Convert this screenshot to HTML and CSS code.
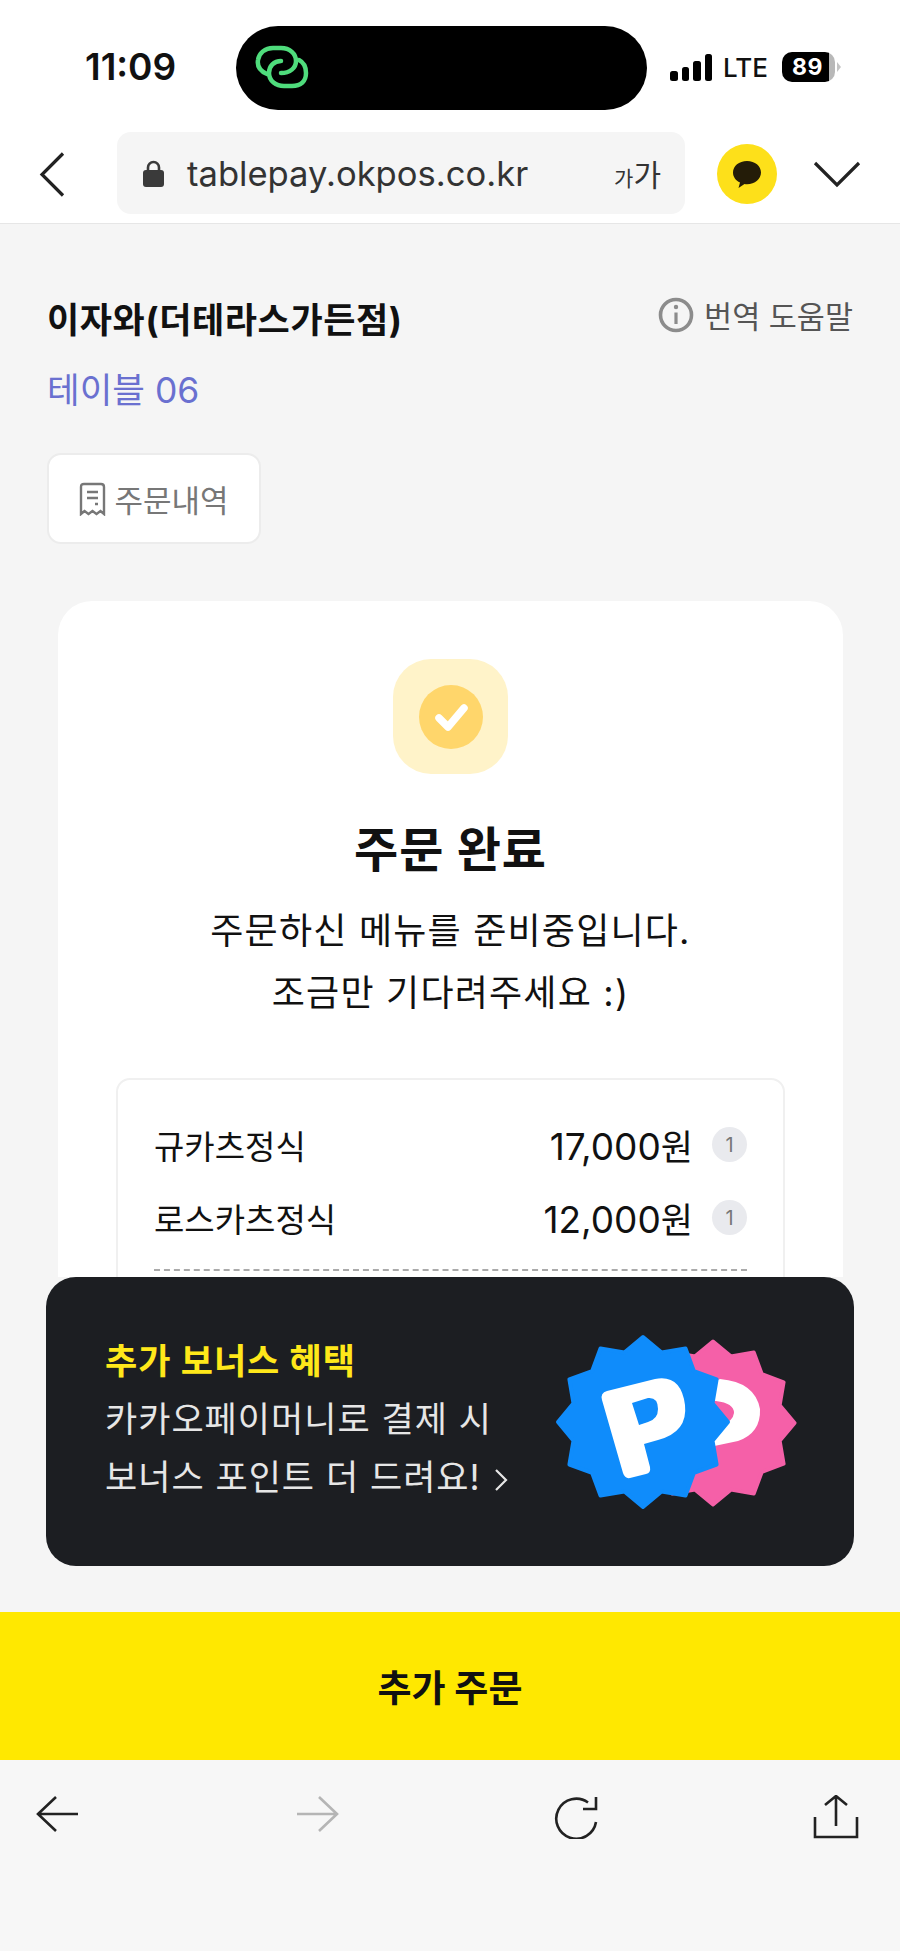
FILE: index.html
```html
<!DOCTYPE html>
<html lang="ko">
<head>
    <meta charset="UTF-8">
    <meta name="viewport" content="width=device-width, initial-scale=1.0">
    <title>주문 완료</title>
    <link rel="stylesheet" href="styles.css">
</head>
<body>
    <div class="status-bar">
        <div class="time">11:09</div>
        <div class="island">
            <svg class="link-icon" width="60" height="48" viewBox="0 0 60 48" fill="none" stroke="#4fdc7c" stroke-width="4.5" stroke-linecap="round">
                <path d="M13 29C6 26 3 21 4 15 5 8 11 3 19 3H27C36 3 42 9 42 16 42 23 36 28 27 28"/>
                <path d="M27 16C20 16 15 21 15 28 15 36 22 41 30 41H38C47 41 52 36 52 28 52 22 49 17 45 15"/>
            </svg>
        </div>
        <div class="status-right">
            <div class="signal">
                <span class="bar bar-1"></span>
                <span class="bar bar-2"></span>
                <span class="bar bar-3"></span>
                <span class="bar bar-4"></span>
            </div>
            <div class="lte">LTE</div>
            <div class="battery"><span class="battery-level">89</span></div>
            <div class="battery-nub"></div>
        </div>
    </div>

    <div class="address-bar">
        <svg class="back-icon" width="26" height="45" viewBox="0 0 26 45" fill="none" stroke="#222" stroke-width="3.2">
            <path d="M24 1.5L3 22.5 24 43.5"/>
        </svg>
        <div class="url-box">
            <svg class="lock-icon" width="23" height="27" viewBox="0 0 23 27">
                <path d="M6 11V7.5a5.5 5.5 0 0 1 11 0V11" fill="none" stroke="#3a3a3a" stroke-width="2.6"/>
                <rect x="1" y="10" width="21" height="17" rx="3" fill="#3a3a3a"/>
            </svg>
            <span class="url-text">tablepay.okpos.co.kr</span>
            <span class="font-size"><small>가</small>가</span>
        </div>
        <div class="talk-btn">
            <svg width="32" height="32" viewBox="0 0 32 32">
                <path d="M16 3C8 3 2 8 2 14.500C2 19 4.800 22.500 9 24.500L7.500 30 13.500 26C14.300 26.100 15.200 26.200 16 26.200 24 26.200 30 21 30 14.500 30 8 24 3 16 3Z" fill="#241c08"/>
            </svg>
        </div>
        <svg class="down-icon" width="48" height="27" viewBox="0 0 48 27" fill="none" stroke="#222" stroke-width="3.2">
            <path d="M2 2L24 24 46 2"/>
        </svg>
    </div>

    <div class="content">
        <div class="store-row">
            <h1 class="store-name">이자와(더테라스가든점)</h1>
            <div class="help">
                <svg width="36" height="36" viewBox="0 0 36 36" fill="none" stroke="#8c8c8c">
                    <circle cx="18" cy="18" r="15.500" stroke-width="3.600"/>
                    <path d="M18 15.500V27" stroke-width="3.200"/>
                    <circle cx="18" cy="10" r="2.200" fill="#8c8c8c" stroke="none"/>
                </svg>
                <span>번역 도움말</span>
            </div>
        </div>
        <p class="table-no">테이블 06</p>
        <button class="history-btn">
            <svg width="27" height="34" viewBox="0 0 27 34" fill="none" stroke="#777" stroke-width="2.400">
                <path d="M2 32V5C2 3 3 2 5 2H22C24 2 25 3 25 5V32L21.500 29 17.500 32 13.500 29 9.500 32 5.500 29Z"/>
                <path d="M8 10H19M8 16H19M16 22H19"/>
            </svg>
            <span>주문내역</span>
        </button>

        <div class="card">
            <div class="done-icon">
                <svg width="64" height="64" viewBox="0 0 64 64">
                    <circle cx="32" cy="32" r="32" fill="#ffd66b"/>
                    <path d="M20 33L29 42 45 23" fill="none" stroke="#fff" stroke-width="7.500" stroke-linecap="round" stroke-linejoin="round"/>
                </svg>
            </div>
            <h2 class="done-title">주문 완료</h2>
            <p class="done-text">주문하신 메뉴를 준비중입니다.<br>조금만 기다려주세요 :)</p>
            <div class="order-box">
                <div class="order-row">
                    <span class="menu-name">규카츠정식</span>
                    <span class="menu-price">17,000<small>원</small></span>
                    <span class="menu-qty">1</span>
                </div>
                <div class="order-row">
                    <span class="menu-name">로스카츠정식</span>
                    <span class="menu-price">12,000<small>원</small></span>
                    <span class="menu-qty">1</span>
                </div>
                <div class="order-line"></div>
            </div>
        </div>
    </div>

    <div class="banner-area">
        <div class="banner">
            <div class="banner-text">
                <div class="banner-title">추가 보너스 혜택</div>
                <div>카카오페이머니로 결제 시</div>
                <div>보너스 포인트 더 드려요! <svg class="banner-arrow" width="14" height="24" viewBox="0 0 14 24" fill="none" stroke="#e6e6e6" stroke-width="2.200"><path d="M2 2L12 12 2 22"/></svg></div>
            </div>
            <svg class="point-icon" width="250" height="190" viewBox="0 0 250 190">
                <defs>
                    <polygon id="star" stroke-width="4" stroke-linejoin="round" points="0,-85 18.600,-69.500 42.500,-73.600 50.900,-50.900 73.600,-42.500 69.500,-18.600 85,0 69.500,18.600 73.600,42.500 50.900,50.900 42.500,73.600 18.600,69.500 0,85 -18.600,69.500 -42.500,73.600 -50.900,50.900 -73.600,42.500 -69.500,18.600 -85,0 -69.500,-18.600 -73.600,-42.500 -50.900,-50.900 -42.500,-73.600 -18.600,-69.500"/>
                </defs>
                <use href="#star" transform="translate(163 96) scale(.96)" fill="#f560a8" stroke="#f560a8"/>
                <path fill="#fff" fill-rule="evenodd" d="M150 62L170 52Q205 55 210 82 211 106 188 114L150 122ZM150 72L166 74Q184 76 184 86 183 94 172 98L150 104Z"/>
                <use href="#star" transform="translate(93 95)" fill="#0f8cfb" stroke="#0f8cfb"/>
                <path fill="#fff" fill-rule="evenodd" d="M52 73Q50 66 57 64L105 52Q131 47 135 78 138 105 108 113L94 117 100 140Q101 146 96 147L80 151Q75 152 73 146ZM82 76 89 98 98 95Q108 92 108 82 108 70 98 71Z"/>
            </svg>
        </div>
    </div>

    <div class="order-more">추가 주문</div>

    <div class="toolbar">
        <svg width="44" height="38" viewBox="0 0 44 38" fill="none" stroke="#222" stroke-width="2.600">
            <path d="M21 2L3 19 21 36M3 19H43"/>
        </svg>
        <svg class="tool-forward" width="44" height="38" viewBox="0 0 44 38" fill="none" stroke="#b5b5b5" stroke-width="2.600">
            <path d="M23 2L41 19 23 36M41 19H1"/>
        </svg>
        <svg class="tool-reload" width="46" height="44" viewBox="0 0 46 44" fill="none" stroke="#222" stroke-width="2.600">
            <path d="M43 27A20 20 0 1 1 35 7.500"/>
            <path d="M43 2V14H30"/>
        </svg>
        <svg class="tool-share" width="46" height="44" viewBox="0 0 46 44" fill="none" stroke="#222" stroke-width="2.600">
            <path d="M12 10L23 1 34 10M23 1V31"/>
            <path d="M2 22V42H44V22"/>
        </svg>
    </div>
</body>
</html>
```

FILE: styles.css
```css
* {
    box-sizing: border-box;
}
html, body {
    margin: 0;
    padding: 0;
}
body {
    width: 900px;
    height: 1951px;
    display: flex;
    flex-direction: column;
    overflow: hidden;
    background-color: #f5f5f5;
    color: #111;
    font-family: Inter, "Noto Sans CJK KR", sans-serif;
}

/* status bar */
.status-bar {
    height: 132px;
    flex-shrink: 0;
    display: flex;
    align-items: flex-start;
    background-color: #fff;
    padding: 26px 0 0 85px;
}
.time {
    width: 151px;
    margin-top: 21px;
    font-size: 37px;
    line-height: 40px;
    font-weight: 600;
}
.island {
    width: 411px;
    height: 84px;
    display: flex;
    align-items: center;
    border-radius: 42px;
    background-color: #000;
    padding-left: 18px;
}
.link-icon {
    margin-top: 2px;
}
.status-right {
    display: flex;
    align-items: center;
    height: 30px;
    margin: 26px 0 0 23px;
}
.signal {
    display: flex;
    align-items: flex-end;
    gap: 4px;
    height: 27px;
    width: 42px;
}
.bar {
    width: 7.5px;
    border-radius: 2.5px;
    background-color: #000;
}
.bar-1 { height: 10px; }
.bar-2 { height: 14px; }
.bar-3 { height: 20px; }
.bar-4 { height: 27px; }
.lte {
    margin-left: 11px;
    width: 59px;
    font-size: 26px;
    font-weight: 500;
}
.battery {
    width: 53px;
    height: 30px;
    border-radius: 10px;
    background: linear-gradient(90deg, #000 89%, #b8b8b8 89%);
    display: flex;
    align-items: center;
    padding-left: 10px;
}
.battery-level {
    font-size: 23px;
    font-weight: 700;
    color: #fff;
    letter-spacing: 0.5px;
}
.battery-nub {
    width: 0;
    height: 0;
    margin-left: 2px;
    border-left: 4px solid #c4c4c4;
    border-top: 5px solid transparent;
    border-bottom: 5px solid transparent;
}

/* address bar */
.address-bar {
    height: 92px;
    flex-shrink: 0;
    display: flex;
    align-items: flex-start;
    background-color: #fff;
    border-bottom: 1px solid #e6e6e6;
    padding-left: 39px;
}
.back-icon {
    margin-top: 20px;
}
.url-box {
    width: 568px;
    height: 82px;
    margin-left: 52px;
    display: flex;
    align-items: center;
    border-radius: 14px;
    background-color: #f5f5f5;
    padding: 0 24px 0 25px;
}
.url-text {
    margin-left: 22px;
    flex: 1;
    font-size: 34.600px;
    color: #333;
}
.font-size {
    font-size: 30px;
    color: #333;
}
.font-size small {
    font-size: 21px;
}
.talk-btn {
    width: 60px;
    height: 60px;
    margin: 12px 0 0 32px;
    display: flex;
    align-items: center;
    justify-content: center;
    border-radius: 50%;
    background-color: #fde01a;
}
.down-icon {
    margin: 29px 0 0 36px;
}

/* content */
.content {
    flex: 1;
    min-height: 0;
    overflow: hidden;
    padding: 0 47px;
}
.store-row {
    display: flex;
    justify-content: space-between;
    align-items: center;
    height: 44px;
    margin-top: 74px;
}
.store-name {
    margin: 0;
    font-size: 35px;
    line-height: 44px;
    font-weight: 700;
    letter-spacing: 0.6px;
}
.help {
    display: flex;
    align-items: center;
    gap: 10px;
    margin-top: -10px;
    font-size: 30.500px;
    color: #555;
}
.table-no {
    margin: 26px 0 0;
    font-size: 35.500px;
    line-height: 46px;
    color: #6a70d0;
}
.history-btn {
    width: 214px;
    height: 91px;
    margin-top: 39px;
    display: flex;
    align-items: center;
    justify-content: center;
    gap: 8px;
    border: 2px solid #ececec;
    border-radius: 14px;
    background-color: #fff;
    font-family: inherit;
    font-size: 31px;
    color: #777;
}
.card {
    height: 900px;
    margin: 57px 10px 0 11px;
    border-radius: 34px;
    background-color: #fff;
    padding: 58px 58px 0;
    text-align: center;
}
.done-icon {
    width: 115px;
    height: 115px;
    margin: 0 auto;
    display: flex;
    align-items: center;
    justify-content: center;
    border-radius: 38px;
    background-color: #fff3c9;
}
.done-title {
    margin: 44px 0 0;
    font-size: 48px;
    line-height: 64px;
    font-weight: 700;
    letter-spacing: 1px;
}
.done-text {
    margin: 18px 0 0;
    font-size: 36px;
    line-height: 62px;
    letter-spacing: 1.200px;
}
.order-box {
    height: 400px;
    margin-top: 54px;
    border: 2px solid #f0f0f0;
    border-radius: 14px;
    padding: 28px 36px 0;
    text-align: left;
}
.order-row {
    display: flex;
    align-items: center;
    height: 73px;
    font-size: 33px;
}
.menu-name {
    flex: 1;
}
.menu-price {
    margin-right: 19px;
    font-size: 37px;
}
.menu-price small {
    font-size: 35px;
}
.menu-qty {
    width: 35px;
    height: 35px;
    display: flex;
    align-items: center;
    justify-content: center;
    border-radius: 50%;
    background-color: #e9eaee;
    font-size: 20px;
    color: #777;
}
.order-line {
    margin-top: 15px;
    border-top: 2px dashed #aaa;
}

.banner-area {
    position: relative;
    height: 365px;
    margin-top: -30px;
    flex-shrink: 0;
    padding: 30px 46px 0;
}
.banner {
    height: 289px;
    display: flex;
    align-items: center;
    justify-content: space-between;
    border-radius: 30px;
    background-color: #1c1e22;
    padding: 0 0 0 59px;
    color: #e6e6e6;
}
.banner-text {
    padding-bottom: 5px;
    font-size: 35px;
    line-height: 58px;
    letter-spacing: 1px;
}
.banner-title {
    font-weight: 700;
    color: #ffe81a;
}
.banner-arrow {
    margin-left: 3px;
    vertical-align: -2px;
}
.point-icon {
    margin-right: 54px;
}

/* bottom */
.order-more {
    height: 148px;
    flex-shrink: 0;
    display: flex;
    align-items: center;
    justify-content: center;
    background-color: #ffe800;
    font-size: 37px;
    font-weight: 700;
    color: #111;
}
.toolbar {
    height: 191px;
    flex-shrink: 0;
    display: flex;
    align-items: flex-start;
    background-color: #f7f7f7;
    padding: 35px 0 0 35px;
}
.tool-forward {
    margin-left: 217px;
}
.tool-reload {
    margin-left: 213px;
}
.tool-share {
    margin-left: 214px;
}
```
